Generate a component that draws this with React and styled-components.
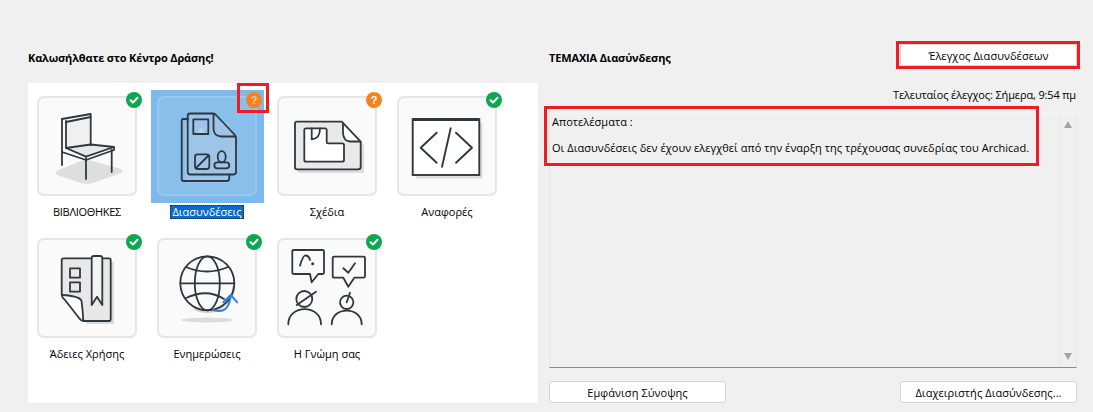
import React from "react";
import styled, { createGlobalStyle } from "styled-components";

const Global = createGlobalStyle`
  html, body { margin: 0; padding: 0; background: #f0f0f0; }
  body { font-family: "Open Sans", "Noto Sans", sans-serif; font-size: 11px; color: #000; }
`;

const Page = styled.div`
  display: flex;
  gap: 11px;
  width: 1093px;
  height: 412px;
  box-sizing: border-box;
  padding: 44px 0 0 28px;
  overflow: hidden;
`;
const LeftColumn = styled.section`
  width: 510px;
  display: flex;
  flex-direction: column;
`;
const RightColumn = styled.section`
  width: 528px;
  display: flex;
  flex-direction: column;
`;
const Heading = styled.h2`
  margin: 0;
  height: 22px;
  padding-top: 6px;
  box-sizing: border-box;
  font-size: 11px;
  line-height: 16px;
  font-weight: 700;
  letter-spacing: -0.15px;
  color: #000;
`;
const Panel = styled.div`
  margin-top: 17px;
  height: 320px;
  box-sizing: border-box;
  background: #fff;
  padding: 13px 9px;
  display: grid;
  grid-template-columns: repeat(4, 100px);
  grid-auto-rows: 126px;
  gap: 16px 20px;
`;
const Tile = styled.div`
  display: flex;
  flex-direction: column;
  align-items: center;
`;
const Card = styled.div`
  position: relative;
  width: 100px;
  height: 100px;
  box-sizing: border-box;
  border-radius: 7px;
  border: 2px solid ${(p) => (p.$selected ? "rgba(255,255,255,.14)" : "#e6e6e6")};
  background: ${(p) => (p.$selected ? "rgba(255,255,255,.09)" : "#fafafa")};
  ${(p) =>
    p.$selected &&
    `&::before {
      content: "";
      position: absolute;
      inset: -8px -9px -9px -8px;
      background: #7db9ea;
      z-index: -1;
    }`}
  svg.art {
    position: absolute;
    left: -2px;
    top: -2px;
    width: 100px;
    height: 100px;
  }
`;
const TileStack = styled.div`
  position: relative;
  z-index: 0;
`;
const Badge = styled.div`
  position: absolute;
  top: -6px;
  right: -7px;
  width: 16px;
  height: 16px;
  border-radius: 50%;
  background: ${(p) => (p.$kind === "ok" ? "#0ca84f" : "#f6821f")};
  color: ${(p) => (p.$selected ? "#e9c9a8" : "#fff")};
  font-size: 11px;
  font-weight: 800;
  line-height: 16px;
  text-align: center;
  font-family: "Liberation Sans", sans-serif;
  svg { display: block; }
`;
const Label = styled.div`
  margin-top: 9px;
  line-height: 14px;
  height: 14px;
  font-size: 11px;
  text-align: center;
  white-space: nowrap;
`;
const LabelText = styled.span`
  display: inline-block;
  padding: 0 2px;
  ${(p) => p.$tight && "letter-spacing: -0.3px;"}
  ${(p) =>
    p.$selected &&
    `background: #0a6ccb; color: #fff; outline: 1px dotted #222; outline-offset: -1px;`}
`;
const HeaderRow = styled.div`
  display: flex;
  justify-content: space-between;
  align-items: flex-start;
`;
const PushButton = styled.button`
  position: relative;
  width: 177px;
  height: 22px;
  box-sizing: border-box;
  padding: 0;
  background: #fff;
  border: 1px solid #d4d4d4;
  border-radius: 3px;
  font: inherit;
  font-size: 11px;
  letter-spacing: .06px;
  color: #000;
`;
const Status = styled.div`
  margin-top: 21px;
  height: 16px;
  line-height: 16px;
  padding-right: 1px;
  text-align: right;
  font-size: 11px;
  letter-spacing: -0.14px;
`;
const ResultsBox = styled.div`
  position: relative;
  margin-top: 10px;
  height: 255px;
  box-sizing: border-box;
  display: flex;
  border: 1px solid #e6e6e6;
  border-top-color: #f8f8f8;
  border-bottom-color: #8c8c8c;
`;
const ResultsText = styled.div`
  flex: 1;
  padding: 1px 2px;
  line-height: 13px;
  font-size: 11px;
  letter-spacing: 0.035px;
  p { margin: 0 0 13px; }
`;
const Scrollbar = styled.div`
  width: 17px;
  box-sizing: border-box;
  border-left: 1px solid #e6e6e6;
  display: flex;
  flex-direction: column;
  justify-content: space-between;
  align-items: center;
  padding: 7px 0 7px;
`;
const Arrow = styled.div`
  width: 0;
  height: 0;
  border-left: 4px solid transparent;
  border-right: 4px solid transparent;
  ${(p) => (p.$up ? "border-bottom: 7px solid #a3a3a3;" : "border-top: 7px solid #a3a3a3;")}
`;
const FooterRow = styled.div`
  margin-top: 13px;
  display: flex;
  justify-content: space-between;
`;
const RedFrame = styled.div`
  position: absolute;
  box-sizing: border-box;
  border: 3px solid #ee1c25;
  pointer-events: none;
  z-index: 3;
`;
const BadgeFrame = styled(RedFrame)`
  left: -9px;
  top: -9px;
  width: 32px;
  height: 30px;
`;
const ButtonFrame = styled(RedFrame)`
  inset: -4px -4px -4px -5px;
`;
const ResultsFrame = styled(RedFrame)`
  left: -6px;
  top: -8px;
  width: 495px;
  height: 60px;
`;

const INK = "#2f373f";
const S = { fill: "none", stroke: INK, strokeWidth: 1.8, strokeLinecap: "round", strokeLinejoin: "round" };

const Chair = () => (
  <svg className="art" viewBox="0 0 100 100">
    <path d="M22 74 L44 65 Q50 63 56 65 L84 73 Q87 75 84 77 L56 87 Q50 89 44 87 L20 79 Q16 76 22 74Z" fill="#dedede" />
    <path d="M29 26 L53.7 21 V49 L29 52Z" fill="#f0f0f0" />
    <path d="M29 52 L53.7 49 L77 51 L49 61 Z" fill="#e8e8e8" />
    <g {...S}>
      <path d="M25 23 L53.7 18 V49" />
      <path d="M25 23 V69" />
      <path d="M29 26 L53.7 21" />
      <path d="M29 25 V52" />
      <path d="M25 56 L49 64 L77 54 V51 L53.7 48.5 L29 52 L49 60.7 L77 51" />
      <path d="M49 62 V83" />
      <path d="M74.7 54 V76" />
    </g>
  </svg>
);
const Linked = () => (
  <svg className="art" viewBox="0 0 100 100">
    <path d="M28 26 H72 V87 H28Z" fill="#9dc6eb" />
    <path d="M33 19 H56 L79 42 V79 H33Z" fill="#9cc5e9" />
    <g {...S}>
      <path d="M31 23 H26 Q24.7 23 24.7 25 V83 Q24.7 85 27 85 H70 Q72.3 85 72.3 82 V78.5" />
      <path d="M33 17.5 H56.5 Q58 17.5 60 20 L77 38 Q79 40 79 43 V76 Q79 78.5 76 78.5 H33 Q30.7 78.5 30.7 76 V20 Q30.7 17.5 33 17.5Z" />
      <path d="M56.5 18 V33 Q57 40 64 40.5 H78.5" />
      <rect x="36.3" y="23.3" width="15" height="14.7" />
      <rect x="38" y="58.3" width="14.3" height="14.7" rx="2.5" />
      <path d="M39 72 L51.5 59.5" />
      <ellipse cx="64.7" cy="60.7" rx="4" ry="5.6" />
      <rect x="57.3" y="66.3" width="15" height="6" rx="3" />
    </g>
    <path d="M41 37 Q44 27 47 37Z" fill="#b5d4ee" />
  </svg>
);
const Drawings = () => (
  <svg className="art" viewBox="0 0 100 100">
    <path d="M21 29 H68 L87 49 V77 H21Z" fill="#dcdcdc" />
    <path d="M20 25.7 H64.7 L83.7 45.7 V71 Q83.7 73.3 81 73.3 H20 Q18 73.3 18 71 V28 Q18 25.7 20 25.7Z" fill="#e9e9e9" />
    <path d="M29 32.3 H49.7 V47.3 H67 V65.7 H29 Q27.3 65.7 27.3 64 V34 Q27.3 32.3 29 32.3Z" fill="#fff" />
    <path d="M66 27 V38 Q66.5 45 73 45.5 H83 Z" fill="#fff" />
    <g {...S}>
      <path d="M20 25.7 H64.7 L83.7 45.7 V71 Q83.7 73.3 81 73.3 H20 Q18 73.3 18 71 V28 Q18 25.7 20 25.7Z" />
      <path d="M66 27 V37 Q66.5 45 73 45.5 H83" />
      <path d="M29 32.3 H48 Q49.7 32.3 49.7 34 V46 Q49.7 47.3 51 47.3 H65 Q67 47.3 67 49 V64 Q67 65.7 65 65.7 H29 Q27.3 65.7 27.3 64 V34 Q27.3 32.3 29 32.3Z" />
      <path d="M34.7 32.5 V43.3 Q43 43 43 32.5" />
    </g>
  </svg>
);
const Code = () => (
  <svg className="art" viewBox="0 0 100 100">
    <path d="M19 27 H85.5 V82.5 H19Z" fill="#dcdcdc" />
    <rect x="15.7" y="23.3" width="66.6" height="55.7" fill="#fff" stroke={INK} strokeWidth="1.9" />
    <path d="M15.7 23.5 H82.3" stroke={INK} strokeWidth="3" />
    <g {...S} strokeWidth="1.9">
      <path d="M39.7 36.7 L23.7 51.7 L39.7 66.7" />
      <path d="M59 36.7 L75 51.7 L59 66.7" />
      <path d="M53.7 32.3 L45 70.7" />
    </g>
  </svg>
);
const Licence = () => (
  <svg className="art" viewBox="0 0 100 100">
    <path d="M28 24 H77 V86 H50 L28 60Z" fill="#dcdcdc" />
    <path d="M26.5 20.3 H72 Q73.7 20.3 73.7 22 V81 Q73.7 83 72 83 H46.3 L24.7 57 V22 Q24.7 20.3 26.5 20.3Z" fill="#e8e8e8" />
    <path d="M25 57 Q44 58 44.7 62 Q46 70 46.3 83Z" fill="#fff" />
    <g {...S}>
      <path d="M54.7 20.3 H26.5 Q24.7 20.3 24.7 22 V57 Q25 60 28 62 L42 80 Q44 83 47 83 H72 Q73.7 83 73.7 81 V22 Q73.7 20.3 72 20.3 H65.3" />
      <path d="M25 57 Q43 58 44.5 63 Q45.8 72 46.3 82.5" />
      <path d="M54.7 67 V20 Q54.7 18 57 18 H63 Q65.3 18 65.3 20 V67 L60 58.7Z" fill="#f4f4f4" />
      <rect x="33" y="30.3" width="10" height="9.4" />
      <rect x="33" y="44.3" width="10" height="9.4" />
    </g>
  </svg>
);
const Updates = () => (
  <svg className="art" viewBox="0 0 100 100">
    <ellipse cx="50.3" cy="82" rx="25.7" ry="2.4" fill="#dcdcdc" />
    <path d="M37 70.5 A27.5 27.5 0 0 0 77 48" fill="none" stroke="#d2d2d2" strokeWidth="3" />
    <g {...S}>
      <circle cx="50.3" cy="45.3" r="27" />
      <ellipse cx="50.3" cy="45.3" rx="12.5" ry="27" />
      <path d="M23.3 45.3 H77.3" />
      <path d="M29 29 Q50 38 71 29" />
      <path d="M29 60 Q50 50 67 61" />
    </g>
    <g fill="none" stroke="#2a7de1" strokeWidth="1.9" strokeLinecap="round" strokeLinejoin="round">
      <path d="M56 72 Q72 77 73.5 58" />
      <path d="M66.3 64.3 L73.7 57 L80.3 64.3" />
    </g>
  </svg>
);
const Opinion = () => (
  <svg className="art" viewBox="0 0 100 100">
    <g {...S}>
      <path d="M17 12 H45.5 Q47 12 47 13.5 V34.5 Q47 36 45.5 36 H41.3 L34.7 44.3 L33 36 H17 Q15.3 36 15.3 34.5 V13.5 Q15.3 12 17 12Z" />
      <path d="M23 27.7 Q26 17 29 17.5 Q32 18 33 22" />
      <path d="M57.5 18.7 H86.5 Q88 18.7 88 20.2 V38.2 Q88 39.7 86.5 39.7 H77.3 L71.3 48.7 L66.3 39.7 H57.5 Q55.7 39.7 55.7 38.2 V20.2 Q55.7 18.7 57.5 18.7Z" />
      <path d="M66.3 30.3 L71.3 34.7 L78 25.3" />
      <circle cx="27.3" cy="61" r="8" />
      <path d="M19.7 67 L39 53.7" />
      <path d="M11.3 86.3 C11.3 66 44 66 44 86.3" />
      <circle cx="69.7" cy="64.3" r="6.7" />
      <path d="M69.7 64.3 L73 54.7" />
      <path d="M54.7 86.3 C54.7 68 84.7 68 84.7 86.3" />
    </g>
    <circle cx="35.7" cy="25.7" r="1.5" fill={INK} />
  </svg>
);

const CheckMark = () => (
  <svg width="16" height="16" viewBox="0 0 16 16">
    <path d="M4.5 8.2 L7 10.5 L11.5 5.8" fill="none" stroke="#fff" strokeWidth="2" strokeLinecap="round" strokeLinejoin="round" />
  </svg>
);

const items = [
  { label: "ΒΙΒΛΙΟΘΗΚΕΣ", art: Chair, kind: "ok", tight: true },
  { label: "Διασυνδέσεις", art: Linked, kind: "ask", selected: true },
  { label: "Σχέδια", art: Drawings, kind: "ask" },
  { label: "Αναφορές", art: Code, kind: "ok" },
  { label: "Άδειες Χρήσης", art: Licence, kind: "ok" },
  { label: "Ενημερώσεις", art: Updates, kind: "ok" },
  { label: "Η Γνώμη σας", art: Opinion, kind: "ok" },
];

export default function App() {
  return (
    <>
      <Global />
      <Page>
        <LeftColumn>
          <Heading>Καλωσήλθατε στο Κέντρο Δράσης!</Heading>
          <Panel>
            {items.map(({ label, art: Art, kind, selected, tight }) => (
              <Tile key={label}>
                <TileStack>
                  <Card $selected={selected}>
                    <Art />
                    <Badge $kind={kind} $selected={selected}>
                      {kind === "ok" ? <CheckMark /> : "?"}
                      {selected && <BadgeFrame />}
                    </Badge>
                  </Card>
                </TileStack>
                <Label>
                  <LabelText $selected={selected} $tight={tight}>{label}</LabelText>
                </Label>
              </Tile>
            ))}
          </Panel>
        </LeftColumn>
        <RightColumn>
          <HeaderRow>
            <Heading>ΤΕΜΑΧΙΑ Διασύνδεσης</Heading>
            <PushButton>
              Έλεγχος Διασυνδέσεων
              <ButtonFrame />
            </PushButton>
          </HeaderRow>
          <Status>Τελευταίος έλεγχος: Σήμερα, 9:54 πμ</Status>
          <ResultsBox>
            <ResultsText>
              <p>Αποτελέσματα :</p>
              <p>Οι Διασυνδέσεις δεν έχουν ελεγχθεί από την έναρξη της τρέχουσας συνεδρίας του Archicad.</p>
            </ResultsText>
            <Scrollbar>
              <Arrow $up />
              <Arrow />
            </Scrollbar>
            <ResultsFrame />
          </ResultsBox>
          <FooterRow>
            <PushButton>Εμφάνιση Σύνοψης</PushButton>
            <PushButton>Διαχειριστής Διασύνδεσης...</PushButton>
          </FooterRow>
        </RightColumn>
      </Page>
    </>
  );
}
